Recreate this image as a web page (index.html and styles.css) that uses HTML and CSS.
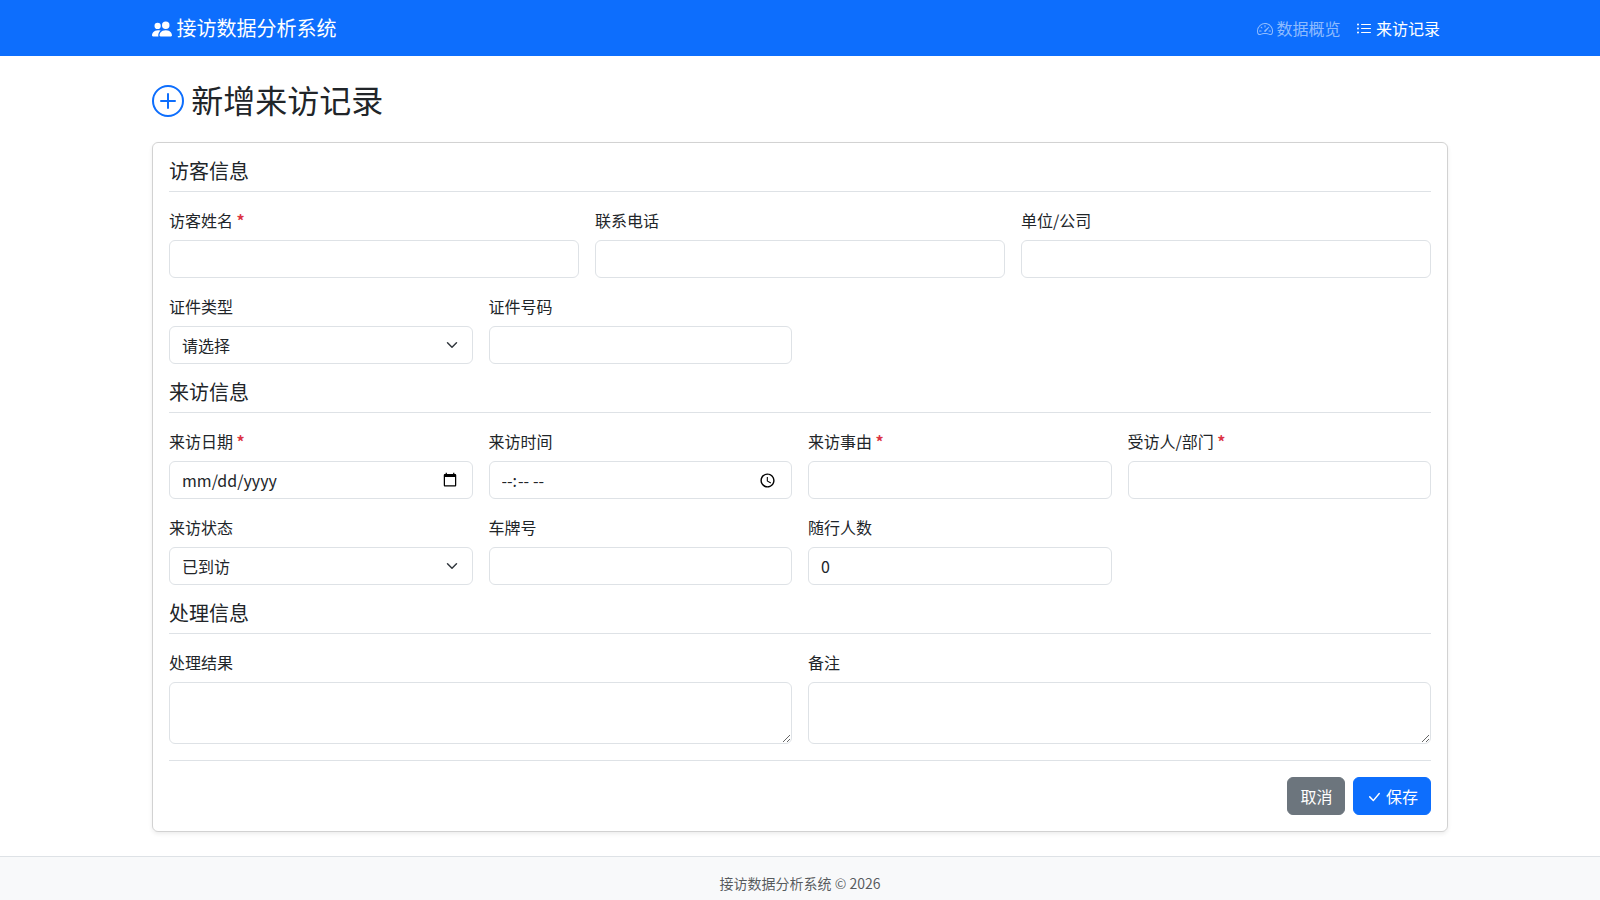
FILE: index.html
```html
<!DOCTYPE html>
<html lang="zh-CN">
<head>
<meta charset="UTF-8">
<meta name="viewport" content="width=device-width, initial-scale=1.0">
<title>新增来访记录 - 接访数据分析系统</title>
<link rel="stylesheet" href="styles.css">
</head>
<body>
    <nav class="navbar">
        <div class="container">
            <a class="brand" href="#">
                <svg class="icon" viewBox="0 0 16 16"><path d="M7 14s-1 0-1-1 1-4 5-4 5 3 5 4-1 1-1 1zm4-6a3 3 0 1 0 0-6 3 3 0 0 0 0 6m-5.784 6A2.24 2.24 0 0 1 5 13c0-1.355.68-2.75 1.936-3.72A6.3 6.3 0 0 0 5 9c-4 0-5 3-5 4s1 1 1 1zM4.5 8a2.5 2.5 0 1 0 0-5 2.5 2.5 0 0 0 0 5"/></svg>
                接访数据分析系统
            </a>
            <div class="nav-links">
                <a class="nav-link" href="#">
                    <svg class="icon" viewBox="0 0 16 16"><path d="M8 4a.5.5 0 0 1 .5.5V6a.5.5 0 0 1-1 0V4.5A.5.5 0 0 1 8 4M3.732 5.732a.5.5 0 0 1 .707 0l.915.914a.5.5 0 1 1-.708.708l-.914-.915a.5.5 0 0 1 0-.707M2 10a.5.5 0 0 1 .5-.5h1.586a.5.5 0 0 1 0 1H2.5A.5.5 0 0 1 2 10m9.5 0a.5.5 0 0 1 .5-.5h1.5a.5.5 0 0 1 0 1H12a.5.5 0 0 1-.5-.5m.754-4.246a.39.39 0 0 0-.527-.02L7.547 9.31a.91.91 0 1 0 1.302 1.258l3.434-4.297a.39.39 0 0 0-.029-.518z"/><path fill-rule="evenodd" d="M0 10a8 8 0 1 1 15.547 2.661c-.442 1.253-1.845 1.602-2.932 1.25C11.309 13.488 9.475 13 8 13c-1.474 0-3.31.488-4.615.911-1.087.352-2.49.003-2.932-1.25A8 8 0 0 1 0 10m8-7a7 7 0 0 0-6.603 9.329c.203.575.923.876 1.68.63C4.397 12.533 6.358 12 8 12s3.604.532 4.923.96c.757.245 1.477-.056 1.68-.631A7 7 0 0 0 8 3"/></svg>
                    数据概览
                </a>
                <a class="nav-link active" href="#">
                    <svg class="icon" viewBox="0 0 16 16"><path fill-rule="evenodd" d="M5 11.5a.5.5 0 0 1 .5-.5h9a.5.5 0 0 1 0 1h-9a.5.5 0 0 1-.5-.5m0-4a.5.5 0 0 1 .5-.5h9a.5.5 0 0 1 0 1h-9a.5.5 0 0 1-.5-.5m0-4a.5.5 0 0 1 .5-.5h9a.5.5 0 0 1 0 1h-9a.5.5 0 0 1-.5-.5m-3 1a1 1 0 1 0 0-2 1 1 0 0 0 0 2m0 4a1 1 0 1 0 0-2 1 1 0 0 0 0 2m0 4a1 1 0 1 0 0-2 1 1 0 0 0 0 2"/></svg>
                    来访记录
                </a>
            </div>
        </div>
    </nav>

    <main class="container main">
        <h2 class="page-title">
            <svg class="icon" viewBox="0 0 16 16"><path d="M8 15A7 7 0 1 1 8 1a7 7 0 0 1 0 14m0 1A8 8 0 1 0 8 0a8 8 0 0 0 0 16"/><path d="M8 4a.5.5 0 0 1 .5.5v3h3a.5.5 0 0 1 0 1h-3v3a.5.5 0 0 1-1 0v-3h-3a.5.5 0 0 1 0-1h3v-3A.5.5 0 0 1 8 4"/></svg>
            新增来访记录
        </h2>

        <form class="card" onsubmit="event.preventDefault()">
            <!-- 访客信息 -->
            <h5 class="section-title">访客信息</h5>
            <div class="row cols-3">
                <div class="field">
                    <label for="visitor_name">访客姓名 <span class="required">*</span></label>
                    <input type="text" class="control" id="visitor_name" required>
                </div>
                <div class="field">
                    <label for="phone">联系电话</label>
                    <input type="text" class="control" id="phone">
                </div>
                <div class="field">
                    <label for="company">单位/公司</label>
                    <input type="text" class="control" id="company">
                </div>
            </div>
            <div class="row cols-4">
                <div class="field">
                    <label for="id_type">证件类型</label>
                    <select class="control select" id="id_type">
                        <option value="">请选择</option>
                    </select>
                </div>
                <div class="field">
                    <label for="id_number">证件号码</label>
                    <input type="text" class="control" id="id_number">
                </div>
            </div>

            <!-- 来访信息 -->
            <h5 class="section-title">来访信息</h5>
            <div class="row cols-4">
                <div class="field">
                    <label for="visit_date">来访日期 <span class="required">*</span></label>
                    <input type="date" class="control" id="visit_date" required>
                </div>
                <div class="field">
                    <label for="visit_time">来访时间</label>
                    <input type="time" class="control" id="visit_time">
                </div>
                <div class="field">
                    <label for="reason">来访事由 <span class="required">*</span></label>
                    <input type="text" class="control" id="reason" required>
                </div>
                <div class="field">
                    <label for="host">受访人/部门 <span class="required">*</span></label>
                    <input type="text" class="control" id="host" required>
                </div>
            </div>
            <div class="row cols-4">
                <div class="field">
                    <label for="status">来访状态</label>
                    <select class="control select" id="status">
                        <option>已到访</option>
                    </select>
                </div>
                <div class="field">
                    <label for="plate">车牌号</label>
                    <input type="text" class="control" id="plate">
                </div>
                <div class="field">
                    <label for="companions">随行人数</label>
                    <input type="number" class="control" id="companions" value="0" min="0">
                </div>
            </div>

            <!-- 处理信息 -->
            <h5 class="section-title">处理信息</h5>
            <div class="row cols-2">
                <div class="field">
                    <label for="result">处理结果</label>
                    <textarea class="control" id="result" rows="2"></textarea>
                </div>
                <div class="field">
                    <label for="remark">备注</label>
                    <textarea class="control" id="remark" rows="2"></textarea>
                </div>
            </div>

            <div class="actions">
                <a class="btn btn-secondary" href="#">取消</a>
                <button type="submit" class="btn btn-primary">
                    <svg class="icon" viewBox="0 0 16 16"><path d="M12.736 3.97a.733.733 0 0 1 1.047 0c.286.289.29.756.01 1.05L7.88 12.01a.733.733 0 0 1-1.065.02L3.217 8.384a.757.757 0 0 1 0-1.06.733.733 0 0 1 1.047 0l3.052 3.093 5.4-6.425z"/></svg>
                    保存
                </button>
            </div>
        </form>
    </main>

    <footer class="footer">
        <small>接访数据分析系统 &copy; 2026</small>
    </footer>
</body>
</html>
```
FILE: styles.css
```css
*{
    box-sizing: border-box;
}
body{
    margin: 0;
    font-family: "Noto Sans CJK SC", sans-serif;
    font-size: 16px;
    line-height: 1.5;
    color: #212529;
    background: #fff;
}
a{
    text-decoration: none;
}
.container{
    max-width: 1320px;
    margin: 0 auto;
    padding: 0 12px;
}
.icon{
    display: inline-block;
    width: 1em;
    height: 1em;
    fill: currentColor;
    vertical-align: -.125em;
}

/* 导航栏 */
.navbar{
    padding: 8px 0;
    background: #0d6efd;
}
.navbar .container{
    display: flex;
    align-items: center;
    justify-content: space-between;
}
.brand{
    padding: 5px 0;
    font-size: 20px;
    color: #fff;
}
.nav-links{
    display: flex;
}
.nav-link{
    padding: 8px;
    color: rgba(255,255,255,.55);
}
.nav-link.active{
    color: #fff;
}

/* 标题 */
.main{
    padding-top: 24px;
}
.page-title{
    margin: 0 0 24px;
    font-size: 32px;
    font-weight: 400;
    line-height: 1.2;
}
.page-title .icon{
    color: #0d6efd;
}

/* 表单 */
.card{
    padding: 16px;
    border: 1px solid rgba(0,0,0,.175);
    border-radius: 6px;
    box-shadow: 0 2px 4px rgba(0,0,0,.075);
}
.section-title{
    margin: 0 0 16px;
    padding-bottom: 8px;
    border-bottom: 1px solid #dee2e6;
    font-size: 20px;
    font-weight: 400;
    line-height: 1.2;
}
.row{
    display: grid;
    gap: 16px;
    margin-bottom: 16px;
}
.cols-2{
    grid-template-columns: repeat(2, 1fr);
}
.cols-3{
    grid-template-columns: repeat(3, 1fr);
}
.cols-4{
    grid-template-columns: repeat(4, 1fr);
}
.field label{
    display: block;
    margin-bottom: 8px;
}
.required{
    color: #dc3545;
    font-weight: bold;
}
.control{
    display: block;
    width: 100%;
    height: 38px;
    margin: 0;
    padding: 6px 12px;
    border: 1px solid #dee2e6;
    border-radius: 6px;
    font-family: inherit;
    font-size: 16px;
    line-height: 1.5;
    color: #212529;
    background-color: #fff;
    appearance: none;
}
/* 去掉日期时间各段的内边距 */
.control::-webkit-datetime-edit,
.control::-webkit-datetime-edit-fields-wrapper,
.control::-webkit-datetime-edit-text,
.control::-webkit-datetime-edit-hour-field,
.control::-webkit-datetime-edit-day-field,
.control::-webkit-datetime-edit-month-field,
.control::-webkit-datetime-edit-year-field{
    padding: 0;
}
textarea.control{
    height: auto;
    min-height: 62px;
    resize: vertical;
}
.select{
    padding-right: 36px;
    background-image: url("data:image/svg+xml,%3csvg xmlns='http://www.w3.org/2000/svg' viewBox='0 0 16 16'%3e%3cpath fill='none' stroke='%23343a40' stroke-linecap='round' stroke-linejoin='round' stroke-width='2' d='m2 5 6 6 6-6'/%3e%3c/svg%3e");
    background-repeat: no-repeat;
    background-position: right 12px center;
    background-size: 16px 12px;
}

/* 按钮 */
.actions{
    display: flex;
    justify-content: flex-end;
    gap: 8px;
    padding-top: 16px;
    border-top: 1px solid #dee2e6;
}
.btn{
    padding: 6px 12px;
    border: 1px solid transparent;
    border-radius: 6px;
    font-family: inherit;
    font-size: 16px;
    line-height: 1.5;
    color: #fff;
}
.btn-secondary{
    background: #6c757d;
    border-color: #6c757d;
}
.btn-primary{
    background: #0d6efd;
    border-color: #0d6efd;
}

/* 页脚 */
.footer{
    margin-top: 24px;
    padding: 16px 0;
    border-top: 1px solid #dee2e6;
    background: #f8f9fa;
    text-align: center;
    font-size: 14px;
    color: rgba(33,37,41,.75);
}
.footer small{
    display: block;
    font-size: 14px;
}
```
